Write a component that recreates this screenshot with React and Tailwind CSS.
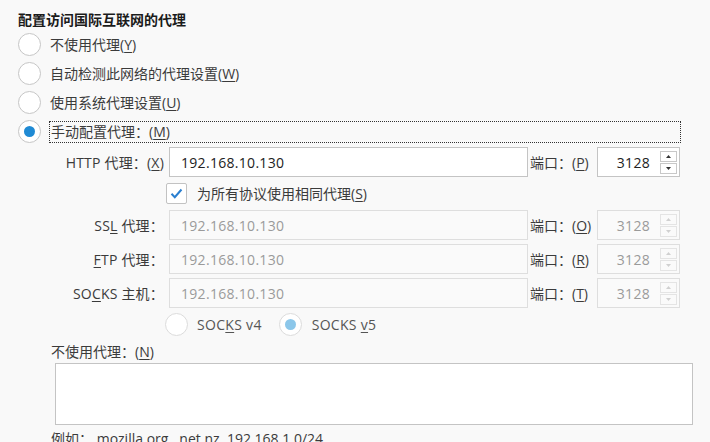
import { useState } from "react";

const font = { fontFamily: '"Open Sans", "Noto Sans CJK SC", sans-serif' };

function Radio({ checked, disabled }) {
  return (
    <span
      className={`flex h-[23px] w-[23px] shrink-0 items-center justify-center rounded-full border bg-white ${
        disabled ? "border-[#dcdcdc]" : "border-[#c6c6c6]"
      }`}
    >
      {checked && (
        <span
          className={`h-[11px] w-[11px] rounded-full ${
            disabled ? "bg-[#8cc7ea]" : "bg-[#1f8ad4]"
          }`}
        />
      )}
    </span>
  );
}

function Spinner({ disabled }) {
  const border = disabled ? "border-[#e4e4e4]" : "border-[#c8c8c8]";
  const fill = disabled ? "#d0d0d0" : "#333";
  return (
    <div className="flex w-[17px] flex-col gap-px">
      <div className={`flex h-[11px] items-center justify-center border ${border}`}>
        <svg width="5" height="3" viewBox="0 0 5 3">
          <path d="M2.5 0L5 3H0z" fill={fill} />
        </svg>
      </div>
      <div className={`flex h-[11px] items-center justify-center border ${border}`}>
        <svg width="5" height="3" viewBox="0 0 5 3">
          <path d="M0 0h5L2.5 3z" fill={fill} />
        </svg>
      </div>
    </div>
  );
}

function ProxyRow({ label, portKey, disabled }) {
  return (
    <div className="flex h-[30px] items-center">
      <div className="w-[164px] text-right tracking-[0.2px] text-[#3b3b3b]">{label}</div>
      <div
        className={`ml-[5px] flex h-[30px] w-[359px] items-center border pl-[11px] tracking-[0.3px] ${
          disabled
            ? "border-[#dedede] bg-[#fafafa] text-[#9a9a9a]"
            : "border-[#c4c4c4] bg-white text-[#222]"
        }`}
      >
        192.168.10.130
      </div>
      <div className="ml-[2px] w-[67px] text-[#3b3b3b]">
        端口：(<u className="underline-offset-2">{portKey}</u>)
      </div>
      <div
        className={`flex h-[30px] w-[83px] items-center justify-end gap-[10px] border pr-[2px] tracking-[0.3px] ${
          disabled
            ? "border-[#dedede] bg-[#fafafa] text-[#9a9a9a]"
            : "border-[#c4c4c4] bg-white text-[#222]"
        }`}
      >
        <span>3128</span>
        <Spinner disabled={disabled} />
      </div>
    </div>
  );
}

export default function App() {
  const [mode] = useState(3);
  const options = [
    ["不使用代理", "Y"],
    ["自动检测此网络的代理设置", "W"],
    ["使用系统代理设置", "U"],
  ];

  return (
    <div
      className="h-[442px] w-[710px] overflow-hidden bg-[#f9f9f9] pt-[10px] text-[14px] text-[#3b3b3b]"
      style={font}
    >
      <div className="ml-[18px] h-[20px] font-bold leading-[20px] text-[#1b1b1b]">
        配置访问国际互联网的代理
      </div>

      {options.map(([text, k], i) => (
        <div key={k} className="flex h-[29px] items-center pl-[18px]">
          <Radio checked={mode === i} />
          <span className="ml-[9px]">
            {text}(<u className="underline-offset-2">{k}</u>)
          </span>
        </div>
      ))}
      <div className="flex h-[29px] items-center pl-[18px]">
        <Radio checked={mode === 3} />
        <span className="ml-[8px] flex h-[22px] w-[632px] items-center border border-dotted border-[#333] pl-px">
          手动配置代理：(<u className="underline-offset-2">M</u>)
        </span>
      </div>

      <div className="mt-px">
        <ProxyRow
          label={
            <>
              HTTP 代理：(<u className="underline-offset-2">X</u>)
            </>
          }
          portKey="P"
        />

        <div className="flex h-[33px] items-center pl-[166px]">
          <span className="flex h-[21px] w-[21px] items-center justify-center rounded-[2px] border border-[#c2c2c2] bg-white">
            <svg width="13" height="11" viewBox="0 0 13 11">
              <path
                d="M1.5 5.8L4.8 9.2L11.5 1.5"
                fill="none"
                stroke="#2a7fd0"
                strokeWidth="2"
              />
            </svg>
          </span>
          <span className="ml-[10px]">
            为所有协议使用相同代理(<u className="underline-offset-2">S</u>)
          </span>
        </div>

        <div className="flex flex-col gap-[4px]">
          <ProxyRow
            label={
              <>
                SS<u className="underline-offset-2">L</u> 代理：
              </>
            }
            portKey="O"
            disabled
          />
          <ProxyRow
            label={
              <>
                <u className="underline-offset-2">F</u>TP 代理：
              </>
            }
            portKey="R"
            disabled
          />
          <ProxyRow
            label={
              <>
                SO<u className="underline-offset-2">C</u>KS 主机：
              </>
            }
            portKey="T"
            disabled
          />
        </div>

        <div className="flex h-[32px] items-center pl-[165px]">
          <Radio disabled />
          <span className="ml-[9px] tracking-[0.3px] text-[#555]">
            SOC<u className="underline-offset-2">K</u>S v4
          </span>
          <span className="ml-[17px]">
            <Radio checked disabled />
          </span>
          <span className="ml-[10px] tracking-[0.3px] text-[#555]">
            SOCKS <u className="underline-offset-2">v</u>5
          </span>
        </div>
      </div>

      <div className="flex h-[22px] items-center pl-[51px]">
        不使用代理：(<u className="underline-offset-2">N</u>)
      </div>
      <div className="ml-[55px] mt-px h-[62px] w-[638px] border border-[#c4c4c4] bg-white" />
      <div className="ml-[51px] mt-[3px] text-[#3b3b3b]">
        例如：.mozilla.org, .net.nz, 192.168.1.0/24
      </div>
    </div>
  );
}
